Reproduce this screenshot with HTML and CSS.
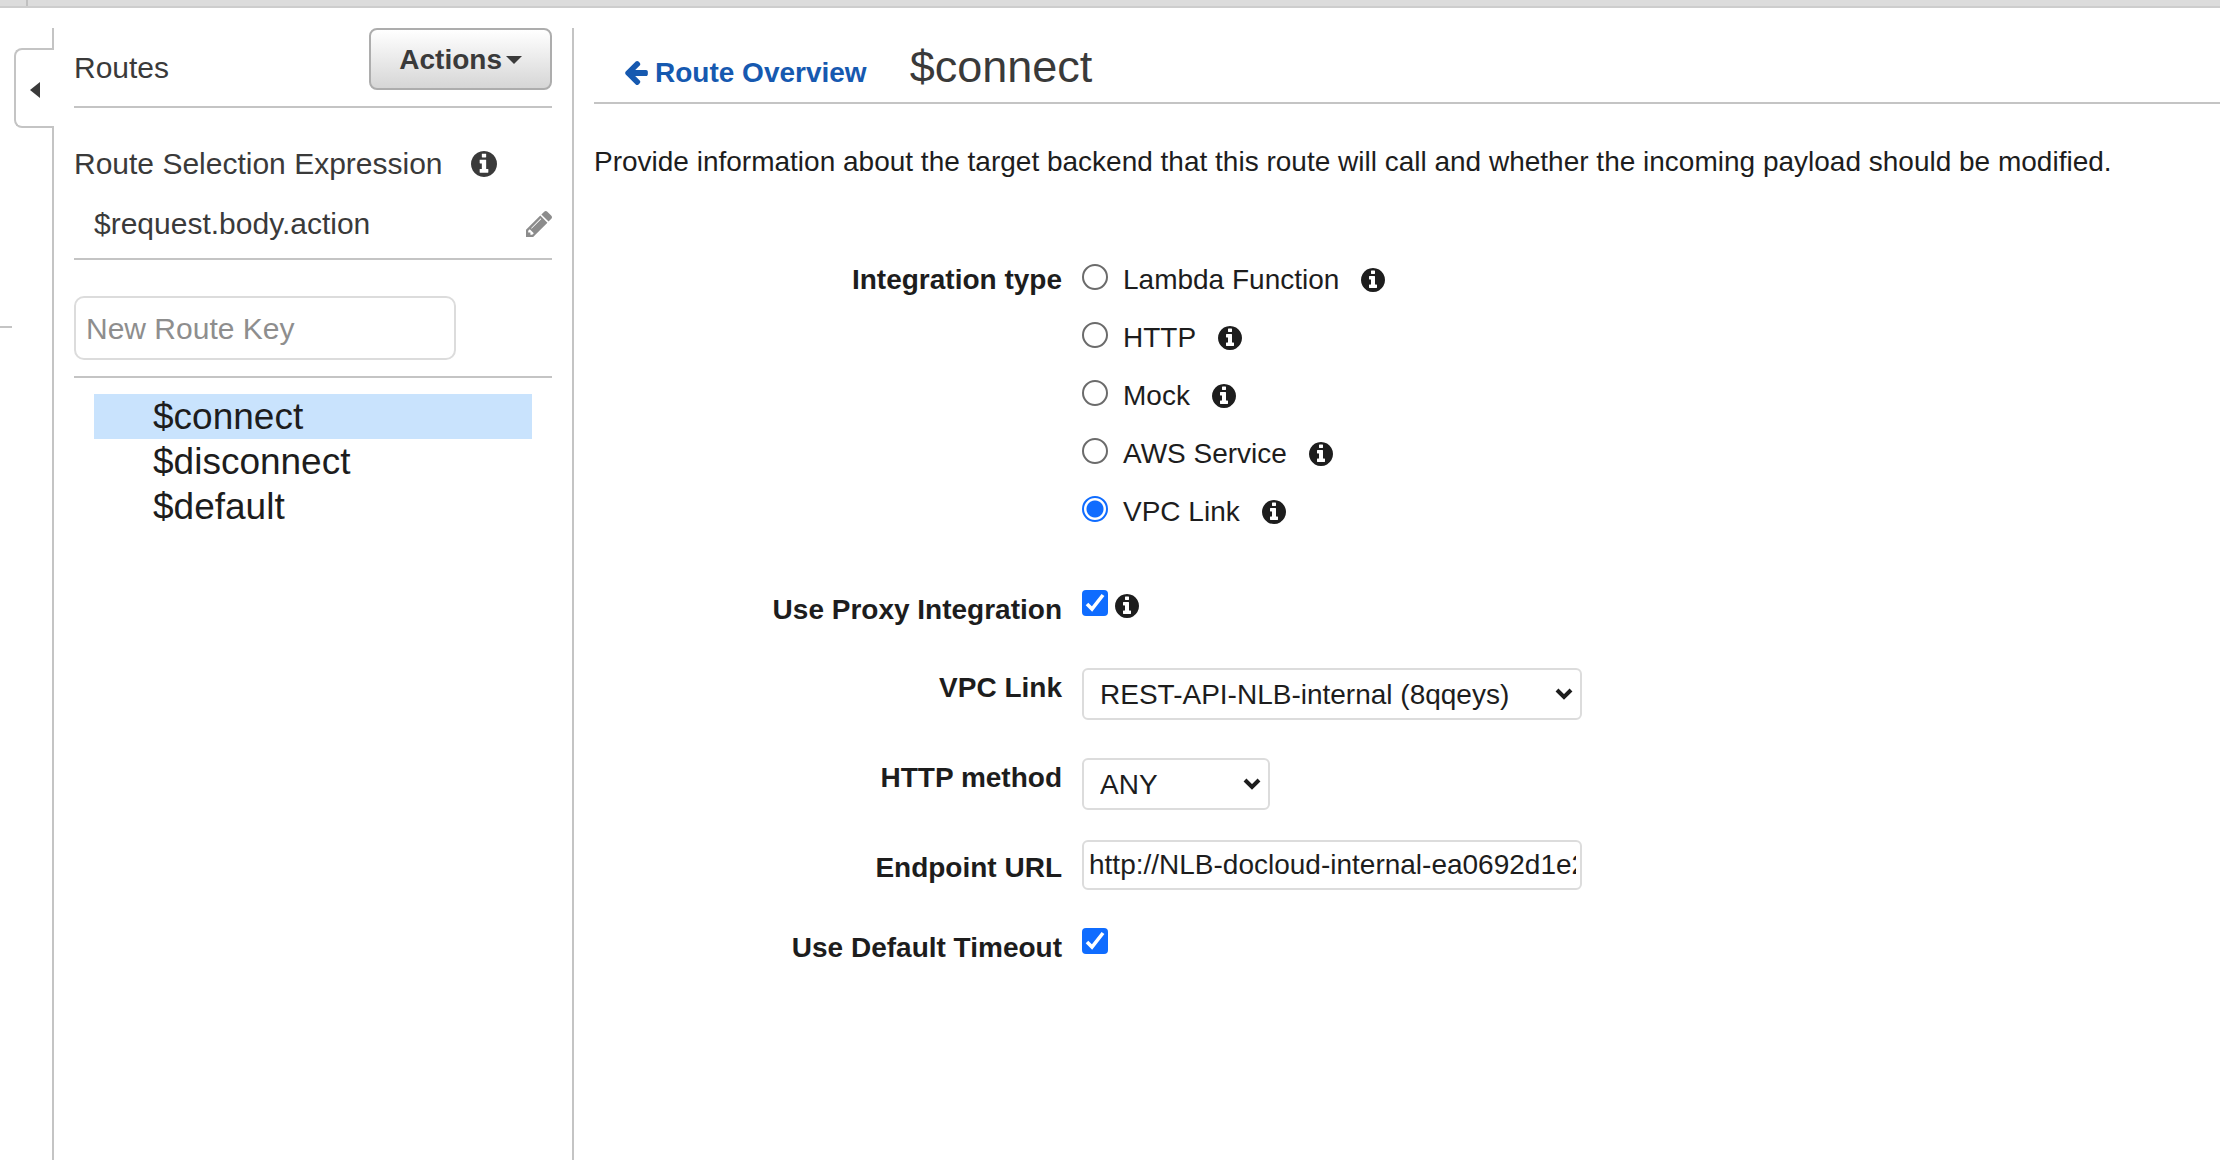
FILE: index.html
```html
<!DOCTYPE html>
<html lang="en">
<head>
    <meta charset="UTF-8">
    <meta name="viewport" content="width=device-width, initial-scale=1.0">
    <title>API Gateway - $connect</title>
    <link rel="stylesheet" href="styles.css">
</head>
<body>

    <!-- Shared icons -->
    <svg class="icon-defs" width="0" height="0" aria-hidden="true">
        <symbol id="info" viewBox="0 0 1536 1536">
            <path d="M1024 1248v-160q0-14-9-23t-23-9h-96v-512q0-14-9-23t-23-9h-320q-14 0-23 9t-9 23v160q0 14 9 23t23 9h96v320h-96q-14 0-23 9t-9 23v160q0 14 9 23t23 9h448q14 0 23-9t9-23zm-128-896v-160q0-14-9-23t-23-9h-192q-14 0-23 9t-9 23v160q0 14 9 23t23 9h192q14 0 23-9t9-23zm640 416q0 209-103 385.5t-279.5 279.5-385.5 103-385.5-103-279.5-279.5-103-385.5 103-385.5 279.5-279.5 385.5-103 385.5 103 279.5 279.5 103 385.5z"/>
        </symbol>
    </svg>

    <div class="top-bar"></div>

    <div class="layout">
        <div class="rail">
            <div class="rail-top"></div>
            <button type="button" class="collapse-btn" aria-label="Collapse">
                <svg width="10" height="16" viewBox="0 0 10 16"><path d="M10 0v16L0 8z"/></svg>
            </button>
            <div class="rail-rest"><hr></div>
        </div>

        <aside class="sidebar">
            <div class="sidebar-header">
                <h2>Routes</h2>
                <button type="button" class="actions-btn">Actions <svg width="16" height="8" viewBox="0 0 16 8"><path d="M0 0h16L8 8z"/></svg></button>
            </div>

            <div class="expression">
                <div class="expression-title">
                    <span>Route Selection Expression</span>
                    <svg class="info-large"><use href="#info"/></svg>
                </div>
                <div class="expression-value">
                    <span>$request.body.action</span>
                    <button type="button" class="edit-btn" aria-label="Edit">
                        <svg width="26" height="26" viewBox="128 149 1515 1515"><path d="M491 1536l91-91-235-235-91 91v107h128v128h107zm523-928q0-22-22-22-10 0-17 7l-542 542q-7 7-7 17 0 22 22 22 10 0 17-7l542-542q7-7 7-17zm-54-192l416 416-832 832h-416v-416zm683 96q0 53-37 90l-166 166-416-416 166-165q36-38 90-38 53 0 91 38l235 234q37 39 37 91z"/></svg>
                    </button>
                </div>
            </div>

            <div class="new-route">
                <input type="text" id="routeKey" name="routeKey" placeholder="New Route Key" aria-label="New Route Key">
            </div>

            <ul class="route-list">
                <li class="active"><a href="#">$connect</a></li>
                <li><a href="#">$disconnect</a></li>
                <li><a href="#">$default</a></li>
            </ul>
        </aside>

        <main class="content">
            <div class="content-header">
                <a href="#" class="back-link"><svg width="23" height="24" viewBox="192 181 1472 1558"><path d="M1664 896v128q0 53-32.5 90.5t-84.5 37.5h-704l293 294q38 36 38 90t-38 90l-75 76q-37 37-90 37-52 0-91-37l-651-652q-37-37-37-90 0-52 37-91l651-650q38-38 91-38 52 0 90 38l75 74q38 38 38 91t-38 91l-293 293h704q52 0 84.5 37.5t32.5 90.5z"/></svg>Route Overview</a>
                <h1>$connect</h1>
            </div>

            <p>Provide information about the target backend that this route will call and whether the incoming payload should be modified.</p>

            <form action="#" method="POST">
                <div class="form-row types" role="radiogroup" aria-labelledby="typeLabel">
                    <span class="form-label" id="typeLabel">Integration type</span>
                    <div class="radio-list">
                        <div class="radio-item">
                            <input type="radio" id="lambda" name="type">
                            <label for="lambda">Lambda Function</label>
                            <svg class="info"><use href="#info"/></svg>
                        </div>
                        <div class="radio-item">
                            <input type="radio" id="http" name="type">
                            <label for="http">HTTP</label>
                            <svg class="info"><use href="#info"/></svg>
                        </div>
                        <div class="radio-item">
                            <input type="radio" id="mock" name="type">
                            <label for="mock">Mock</label>
                            <svg class="info"><use href="#info"/></svg>
                        </div>
                        <div class="radio-item">
                            <input type="radio" id="aws" name="type">
                            <label for="aws">AWS Service</label>
                            <svg class="info"><use href="#info"/></svg>
                        </div>
                        <div class="radio-item">
                            <input type="radio" id="vpc" name="type" checked>
                            <label for="vpc">VPC Link</label>
                            <svg class="info"><use href="#info"/></svg>
                        </div>
                    </div>
                </div>
                <div class="form-row">
                    <label class="form-label" for="proxy">Use Proxy Integration</label>
                    <div class="check">
                        <input type="checkbox" id="proxy" name="proxy" checked>
                        <svg class="info"><use href="#info"/></svg>
                    </div>
                </div>
                <div class="form-row">
                    <label class="form-label" for="vpcLink">VPC Link</label>
                    <select id="vpcLink" name="vpcLink">
                        <option>REST-API-NLB-internal (8qqeys)</option>
                    </select>
                </div>
                <div class="form-row">
                    <label class="form-label" for="method">HTTP method</label>
                    <select id="method" name="method" class="short">
                        <option>ANY</option>
                        <option>GET</option>
                        <option>POST</option>
                    </select>
                </div>
                <div class="form-row endpoint">
                    <label class="form-label" for="endpoint">Endpoint URL</label>
                    <input type="text" id="endpoint" name="endpoint" value="http://NLB-docloud-internal-ea0692d1e2">
                </div>
                <div class="form-row">
                    <label class="form-label" for="timeout">Use Default Timeout</label>
                    <div class="check">
                        <input type="checkbox" id="timeout" name="timeout" checked>
                    </div>
                </div>
            </form>
        </main>
    </div>

</body>
</html>
```
FILE: styles.css
```css
* {
    box-sizing: border-box;
}

body {
    font-family: "Liberation Sans", Arial, sans-serif;
    font-size: 28px;
    line-height: 40px;
    color: #1d1d1d;
    margin: 0;
    background-color: #fff;
    display: flex;
    flex-direction: column;
    min-height: 100vh;
}

h1, h2, p, ul {
    margin: 0;
    padding: 0;
    font-weight: normal;
}

button, input, select {
    font-family: inherit;
    font-size: 28px;
    color: inherit;
    margin: 0;
}

svg {
    fill: currentColor;
    flex-shrink: 0;
}

.icon-defs {
    position: absolute;
}

.top-bar {
    height: 8px;
    padding-left: 26px;
    background-color: #dcdcdc;
    border-bottom: 2px solid #cdcdcd;
}

/* Small separator in the bar above the page */
.top-bar::before {
    content: "";
    display: block;
    width: 2px;
    height: 6px;
    background-color: #c0c0c0;
}

.layout {
    display: flex;
    flex: 1;
    padding-top: 20px;
}

/* Collapse tab on the left edge */
.rail {
    width: 54px;
    flex-shrink: 0;
    display: flex;
    flex-direction: column;
}

.rail-top {
    height: 20px;
    border-right: 2px solid #c4c4c4;
}

.collapse-btn {
    height: 80px;
    margin-left: 14px;
    padding: 4px 0 0 14px;
    display: flex;
    align-items: center;
    background: none;
    border: 2px solid #c4c4c4;
    border-right: none;
    border-radius: 8px 0 0 8px;
    color: #3a3a3a;
    cursor: pointer;
}

.rail-rest {
    flex: 1;
    padding-top: 198px;
    border-right: 2px solid #c4c4c4;
}

.rail-rest hr {
    width: 12px;
    margin: 0;
    border: none;
    border-top: 2px solid #c4c4c4;
}

/* Sidebar */
.sidebar {
    width: 520px;
    flex-shrink: 0;
    padding: 0 20px;
    border-right: 2px solid #c4c4c4;
    font-size: 30px;
    color: #3a3a3a;
}

.sidebar-header {
    display: flex;
    justify-content: space-between;
    align-items: flex-start;
    height: 80px;
    border-bottom: 2px solid #c4c4c4;
}

.sidebar-header h2 {
    font-size: 30px;
    padding-top: 20px;
}

.actions-btn {
    height: 62px;
    padding: 2px 28px 0;
    display: flex;
    align-items: center;
    gap: 4px;
    font-weight: bold;
    background: linear-gradient(#fff, #d6d6d6);
    border: 2px solid #adadad;
    border-radius: 8px;
    cursor: pointer;
}

.expression {
    padding: 36px 0 14px;
    border-bottom: 2px solid #c4c4c4;
}

.expression-title {
    display: flex;
    align-items: center;
    gap: 28px;
}

.expression-value {
    display: flex;
    align-items: center;
    justify-content: space-between;
    margin-top: 20px;
    padding-left: 20px;
}

.edit-btn {
    display: flex;
    padding: 0;
    background: none;
    border: none;
    color: #8c8c8c;
    cursor: pointer;
}

.new-route {
    display: flex;
    padding: 36px 0 16px;
    border-bottom: 2px solid #c4c4c4;
}

.new-route input {
    width: 80%;
    height: 64px;
    padding: 2px 10px 0;
    font-size: 30px;
    border: 2px solid #dcdcdc;
    border-radius: 10px;
}

.new-route input::placeholder {
    color: #8e8e8e;
    opacity: 1;
}

.route-list {
    list-style: none;
    margin: 16px 20px 0;
    font-size: 37px;
    line-height: 45px;
}

.route-list a {
    display: block;
    padding-left: 59px;
    color: #1d1d1d;
    text-decoration: none;
}

.route-list .active {
    background-color: #c9e3fd;
}

/* Main content */
.content {
    flex: 1;
    min-width: 0;
    padding-left: 20px;
}

.content-header {
    display: flex;
    align-items: baseline;
    gap: 43px;
    padding: 16px 0 12px 31px;
    border-bottom: 2px solid #c4c4c4;
}

.content-header h1 {
    font-size: 45px;
    line-height: 46px;
    color: #3a3a3a;
}

.back-link {
    line-height: 32px;
    color: #1659b0;
    font-weight: bold;
    text-decoration: none;
}

.back-link svg {
    margin-right: 7px;
    vertical-align: -3px;
}

.content p {
    margin-top: 38px;
}

form {
    margin-top: 78px;
}

.form-row {
    display: grid;
    grid-template-columns: minmax(0, 468px) 1fr;
    column-gap: 20px;
    align-items: start;
    margin-bottom: 38px;
}

.form-row.types {
    margin-bottom: 58px;
}

.form-label {
    font-weight: bold;
    text-align: right;
}

.form-row.endpoint {
    margin-top: -8px;
}

.endpoint .form-label {
    padding-top: 8px;
}

.radio-list {
    display: grid;
    gap: 18px;
}

.radio-item {
    display: flex;
    align-items: center;
}

.radio-item label {
    margin: 0 22px 0 15px;
}

.info {
    width: 24px;
    height: 24px;
}

.info-large {
    width: 26px;
    height: 26px;
}

input[type="radio"] {
    appearance: none;
    width: 26px;
    height: 26px;
    margin-bottom: 6px;
    border: 2px solid #6b6b6b;
    border-radius: 50%;
}

input[type="radio"]:checked {
    border-color: #0f6cff;
    background: radial-gradient(circle, #0f6cff 8px, #fff 9px);
}

.check {
    display: flex;
    gap: 7px;
}

.check .info {
    margin-top: 4px;
}

input[type="checkbox"] {
    appearance: none;
    width: 26px;
    height: 26px;
    border-radius: 4px;
    border: 2px solid #6b6b6b;
}

input[type="checkbox"]:checked {
    border: none;
    background: #0f6cff url("data:image/svg+xml,%3Csvg xmlns='http://www.w3.org/2000/svg' viewBox='0 0 26 26'%3E%3Cpath d='M5 14l5 5L21 5' fill='none' stroke='white' stroke-width='3.6'/%3E%3C/svg%3E");
}

select {
    appearance: none;
    width: 500px;
    max-width: 100%;
    height: 52px;
    padding: 0 40px 0 16px;
    border: 2px solid #dcdcdc;
    border-radius: 6px;
    background: #fff url("data:image/svg+xml,%3Csvg xmlns='http://www.w3.org/2000/svg' width='18' height='12' viewBox='0 0 18 12'%3E%3Cpath d='M2 2l7 7 7-7' fill='none' stroke='%231d1d1d' stroke-width='4'/%3E%3C/svg%3E") no-repeat right 7px center;
}

select.short {
    width: 188px;
}

.endpoint input {
    width: 500px;
    max-width: 100%;
    height: 50px;
    padding: 0 4px 0 5px;
    border: 2px solid #dcdcdc;
    border-radius: 6px;
}
```
